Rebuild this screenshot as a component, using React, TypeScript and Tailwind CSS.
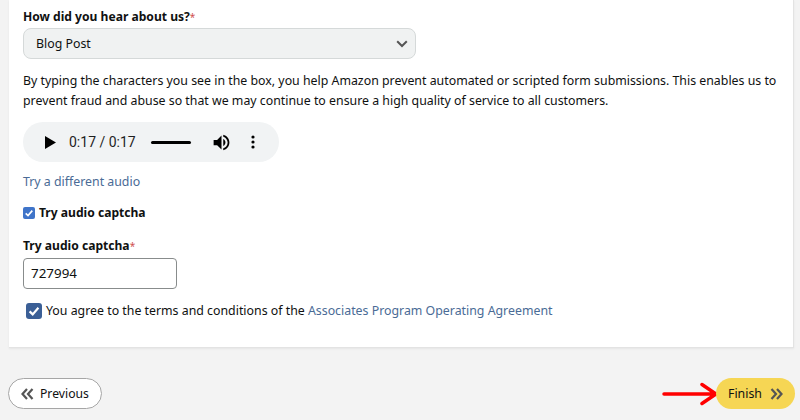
import React from "react";

const Check = () => (
  <svg viewBox="0 0 16 16" className="w-full h-full">
    <path d="M3.6 8.4 L6.7 11.4 L12.4 4.8" fill="none" stroke="#fff" strokeWidth="2.2" />
  </svg>
);

const Chevrons = ({ left, color }: { left?: boolean; color: string }) => (
  <svg width="13" height="12" viewBox="0 0 13 12" className={left ? "" : "rotate-180"}>
    <path d="M6 1 L1.5 6 L6 11 M11.5 1 L7 6 L11.5 11" fill="none" stroke={color} strokeWidth="2.2" />
  </svg>
);

export default function App() {
  return (
    <div className="w-[800px] h-[420px] overflow-hidden bg-[#f3f3f3] text-[#0f1111] text-[12.35px] font-['Noto_Sans','Open_Sans',sans-serif] flex flex-col">
      <div className="ml-[9px] w-[785px] h-[348px] shrink-0 bg-white border-b border-r border-[#e3e3e3] shadow-[0_1px_2px_rgba(0,0,0,0.06)] pl-[14px] pr-[10px] flex flex-col">
        <div className="mt-[8px] h-[18px] leading-[18px] font-bold text-[12.1px]">
          How did you hear about us?<span className="text-[#d05050] font-normal text-[10px]">*</span>
        </div>
        <div className="mt-[2px] w-[393px] h-[31px] shrink-0 bg-[#f0f2f2] border border-[#d5d9d9] rounded-lg flex items-center justify-between pl-[12px] pr-[7px]">
          <span className="pt-[1px]">Blog Post</span>
          <svg width="12" height="8" viewBox="0 0 12 8">
            <path d="M1.2 1.3 L6 6 L10.8 1.3" fill="none" stroke="#555" strokeWidth="2" />
          </svg>
        </div>
        <p className="mt-[12px] leading-[20px] whitespace-nowrap">
          By typing the characters you see in the box, you help Amazon prevent automated or scripted form submissions. This enables us to
          <br />
          prevent fraud and abuse so that we may continue to ensure a high quality of service to all customers.
        </p>
        <div className="mt-[11px] w-[256px] h-[40px] shrink-0 bg-[#f1f3f4] rounded-full flex items-center pl-[22px] text-[14px] font-['Roboto',sans-serif] text-[#1f1f1f]">
          <svg width="11" height="13" viewBox="0 0 11 13">
            <path d="M0 0 L11 6.5 L0 13 Z" fill="#000" />
          </svg>
          <span className="ml-[13px] w-[66px] whitespace-nowrap">0:17 / 0:17</span>
          <div className="ml-[16px] w-[40px] h-[3px] rounded-full bg-black" />
          <svg className="ml-[20px]" width="21" height="21" viewBox="0 0 24 24">
            <path d="M3 9v6h4l5 5V4L7 9H3zm13.5 3c0-1.8-1-3.3-2.5-4v8c1.5-.7 2.5-2.2 2.5-4zM14 3.2v2.1c2.9.9 5 3.5 5 6.7s-2.1 5.8-5 6.7v2.1c4-.9 7-4.5 7-8.8s-3-7.9-7-8.8z" fill="#000" />
          </svg>
          <svg className="ml-[19px]" width="4" height="14" viewBox="0 0 4 14">
            <circle cx="2" cy="2" r="1.6" fill="#000" />
            <circle cx="2" cy="7" r="1.6" fill="#000" />
            <circle cx="2" cy="12" r="1.6" fill="#000" />
          </svg>
        </div>
        <div className="mt-[10px] h-[20px] leading-[20px] text-[#4a6b96]">Try a different audio</div>
        <div className="mt-[11px] h-[20px] flex items-center font-bold text-[12.1px]">
          <span className="w-[12px] h-[12px] rounded-[2px] bg-[#3f74c9] mr-[4px]"><Check /></span>
          Try audio captcha
        </div>
        <div className="mt-[14px] h-[18px] leading-[18px] font-bold text-[12.1px]">
          Try audio captcha<span className="text-[#d05050] font-normal text-[10px]">*</span>
        </div>
        <div className="mt-[3px] w-[154px] h-[31px] shrink-0 bg-white border border-[#888c8c] rounded-[4px] flex items-center pl-[7px] text-[13.4px]">727994</div>
        <div className="mt-[12px] h-[20px] flex items-center pl-[3px]">
          <span className="w-[16px] h-[16px] rounded-[3px] bg-[#3b5f96] mr-[4px]"><Check /></span>
          <span className="whitespace-nowrap">
            You agree to the terms and conditions of the <span className="text-[#4a6b96]">Associates Program Operating Agreement</span>
          </span>
        </div>
      </div>
      <div className="mt-[30px] ml-[8px] mr-[5px] h-[31px] flex items-center justify-between">
        <div className="w-[94px] h-[31px] bg-white border border-[#a6a6a6] rounded-full flex items-center pl-[12px] gap-[6px]">
          <Chevrons left color="#555" />
          <span className="text-[12.2px] pt-[1px]">Previous</span>
        </div>
        <div className="flex items-center">
          <svg width="56" height="24" viewBox="0 0 56 24" className="mr-[-2px]">
            <path d="M2 12 H52 M40 2.5 L54 12 L40 21.5" fill="none" stroke="#ff0000" strokeWidth="3.5" strokeLinecap="round" />
          </svg>
          <div className="w-[79px] h-[31px] bg-[#f6d654] rounded-full flex items-center pl-[12px] gap-[8px]">
            <span className="pt-[1px]">Finish</span>
            <Chevrons color="#555" />
          </div>
        </div>
      </div>
    </div>
  );
}
